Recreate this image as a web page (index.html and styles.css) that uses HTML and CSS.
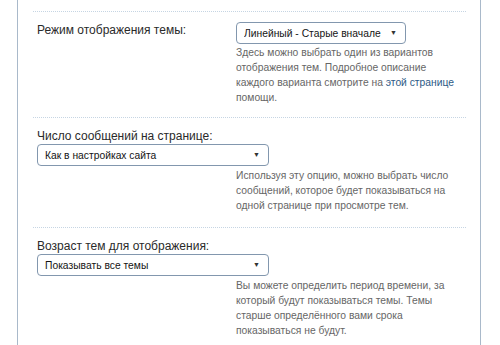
FILE: index.html
```html
<!DOCTYPE html>
<html>
<head>
    <title>Настройки отображения</title>
    <link rel="stylesheet" href="styles.css">
</head>
<body>
    <div class="panel">
        <dl class="row row-inline">
            <dt>Режим отображения темы:</dt>
            <dd>
                <div class="select-wrap select-short">
                    <select>
                        <option>Линейный - Старые вначале</option>
                        <option>Линейный - Новые вначале</option>
                    </select>
                    <span class="arrow">&#9660;</span>
                </div>
                <p class="hint">Здесь можно выбрать один из вариантов отображения тем. Подробное описание каждого варианта смотрите на <a href="#">этой странице</a> помощи.</p>
            </dd>
        </dl>

        <dl class="row row-stacked">
            <dt>Число сообщений на странице:</dt>
            <dd>
                <div class="select-wrap">
                    <select>
                        <option>Как в настройках сайта</option>
                    </select>
                    <span class="arrow">&#9660;</span>
                </div>
                <p class="hint hint-offset">Используя эту опцию, можно выбрать число сообщений, которое будет показываться на одной странице при просмотре тем.</p>
            </dd>
        </dl>

        <dl class="row row-stacked">
            <dt>Возраст тем для отображения:</dt>
            <dd>
                <div class="select-wrap">
                    <select>
                        <option>Показывать все темы</option>
                    </select>
                    <span class="arrow">&#9660;</span>
                </div>
                <p class="hint hint-offset">Вы можете определить период времени, за который будут показываться темы. Темы старше определённого вами срока показываться не будут.</p>
            </dd>
        </dl>
    </div>
</body>
</html>
```

FILE: styles.css
```css
* {
    margin: 0;
    padding: 0;
    box-sizing: border-box;
}

body {
    font-family: "Liberation Sans", Arial, sans-serif;
    background-color: #fff;
    color: #222;
}

.panel {
    margin-left: 17px;
    width: 464px;
    min-height: 345px;
    border-left: 1px solid #a9b9ca;
    border-right: 1px solid #a9b9ca;
    padding: 11px 14px 0 15px;
}

.row {
    border-top: 1px dotted #c6d5e3;
    padding: 10px 0 12px 4px;
}

.row-inline {
    display: grid;
    grid-template-columns: 199px 1fr;
}

.row-stacked {
    padding-bottom: 14px;
}

.row dt {
    font-size: 12px;
    line-height: 16px;
    color: #2a2a2a;
}

.select-wrap {
    position: relative;
    width: 232px;
    height: 22px;
}

.select-short {
    width: 170px;
}

.select-wrap select {
    appearance: none;
    -webkit-appearance: none;
    width: 100%;
    height: 100%;
    border: 1px solid #8297ae;
    border-radius: 4px;
    background: #fff;
    padding: 0 20px 0 7px;
    font-family: "Liberation Sans", Arial, sans-serif;
    font-size: 10.3px;
    color: #141414;
}

.arrow {
    position: absolute;
    right: 9px;
    top: 7px;
    font-size: 7px;
    color: #333;
    pointer-events: none;
}

.hint {
    font-size: 10.3px;
    line-height: 15px;
    color: #666;
    margin-top: 1px;
    width: 222px;
}

.hint-offset {
    margin-left: 199px;
    margin-top: 2px;
}

.hint a {
    color: #2d5a86;
    text-decoration: none;
}
```
